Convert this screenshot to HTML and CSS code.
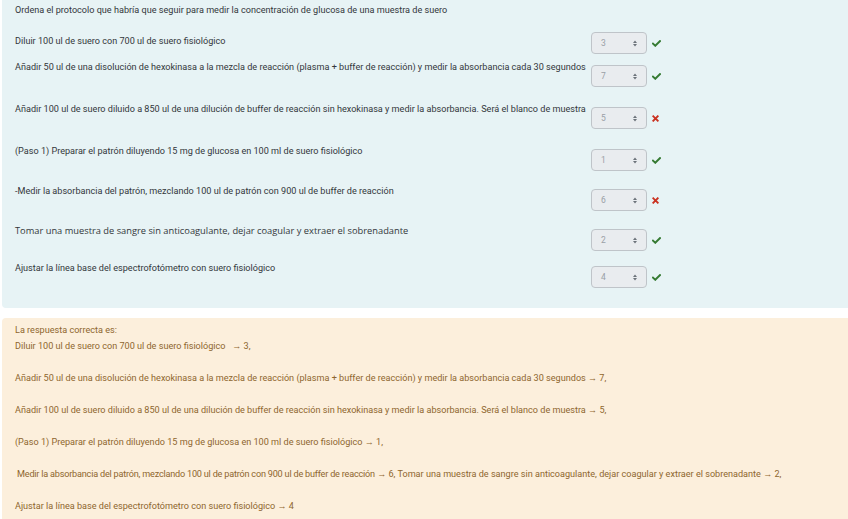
FILE: index.html
```html
<!DOCTYPE html>
<html lang="es">
<head>
    <meta charset="UTF-8">
    <title>Pregunta de emparejamiento</title>
    <link rel="stylesheet" href="styles.css">
</head>
<body>
    <div class="que">
        <div class="formulation">
            <p class="qtext">Ordena el protocolo que habría que seguir para medir la concentración de glucosa de una muestra de suero</p>

            <div class="answer">
                <div class="row first">
                    <div class="stem">Diluir 100 ul de suero con 700 ul de suero fisiológico</div>
                    <div class="control">
                        <div class="select"><span>3</span><svg class="arrows" viewBox="0 0 4 7"><path d="M0 3 L2 0.5 L4 3 Z M0 4 L2 6.5 L4 4 Z"/></svg></div>
                        <svg class="mark ok" viewBox="0 0 10 8"><path d="M1 4.2 L3.6 6.6 L9 1.2"/></svg>
                    </div>
                </div>
                <div class="row tall">
                    <div class="stem">Añadir 50 ul de una disolución de hexokinasa a la mezcla de reacción (plasma + buffer de reacción) y medir la absorbancia cada 30 segundos</div>
                    <div class="control">
                        <div class="select"><span>7</span><svg class="arrows" viewBox="0 0 4 7"><path d="M0 3 L2 0.5 L4 3 Z M0 4 L2 6.5 L4 4 Z"/></svg></div>
                        <svg class="mark ok" viewBox="0 0 10 8"><path d="M1 4.2 L3.6 6.6 L9 1.2"/></svg>
                    </div>
                </div>
                <div class="row tall">
                    <div class="stem">Añadir 100 ul de suero diluido a 850 ul de una dilución de buffer de reacción sin hexokinasa y medir la absorbancia. Será el blanco de muestra</div>
                    <div class="control">
                        <div class="select"><span>5</span><svg class="arrows" viewBox="0 0 4 7"><path d="M0 3 L2 0.5 L4 3 Z M0 4 L2 6.5 L4 4 Z"/></svg></div>
                        <svg class="mark bad" viewBox="0 0 8 8"><path d="M1.5 1.5 L6.5 6.5 M6.5 1.5 L1.5 6.5"/></svg>
                    </div>
                </div>
                <div class="row">
                    <div class="stem">(Paso 1) Preparar el patrón diluyendo 15 mg de glucosa en 100 ml de suero fisiológico</div>
                    <div class="control">
                        <div class="select"><span>1</span><svg class="arrows" viewBox="0 0 4 7"><path d="M0 3 L2 0.5 L4 3 Z M0 4 L2 6.5 L4 4 Z"/></svg></div>
                        <svg class="mark ok" viewBox="0 0 10 8"><path d="M1 4.2 L3.6 6.6 L9 1.2"/></svg>
                    </div>
                </div>
                <div class="row">
                    <div class="stem">-Medir la absorbancia del patrón, mezclando 100 ul de patrón con 900 ul de buffer de reacción</div>
                    <div class="control">
                        <div class="select"><span>6</span><svg class="arrows" viewBox="0 0 4 7"><path d="M0 3 L2 0.5 L4 3 Z M0 4 L2 6.5 L4 4 Z"/></svg></div>
                        <svg class="mark bad" viewBox="0 0 8 8"><path d="M1.5 1.5 L6.5 6.5 M6.5 1.5 L1.5 6.5"/></svg>
                    </div>
                </div>
                <div class="row short">
                    <div class="stem"><span class="pasted">Tomar una muestra de sangre sin anticoagulante, dejar coagular y extraer el sobrenadante</span></div>
                    <div class="control">
                        <div class="select"><span>2</span><svg class="arrows" viewBox="0 0 4 7"><path d="M0 3 L2 0.5 L4 3 Z M0 4 L2 6.5 L4 4 Z"/></svg></div>
                        <svg class="mark ok" viewBox="0 0 10 8"><path d="M1 4.2 L3.6 6.6 L9 1.2"/></svg>
                    </div>
                </div>
                <div class="row">
                    <div class="stem">Ajustar la línea base del espectrofotómetro con suero fisiológico</div>
                    <div class="control">
                        <div class="select"><span>4</span><svg class="arrows" viewBox="0 0 4 7"><path d="M0 3 L2 0.5 L4 3 Z M0 4 L2 6.5 L4 4 Z"/></svg></div>
                        <svg class="mark ok" viewBox="0 0 10 8"><path d="M1 4.2 L3.6 6.6 L9 1.2"/></svg>
                    </div>
                </div>
            </div>
        </div>

        <div class="outcome">
            <p class="lead">La respuesta correcta es:</p>
            <p>Diluir 100 ul de suero con 700 ul de suero fisiológico&nbsp;&nbsp;&nbsp;→ 3,</p>
            <p>Añadir 50 ul de una disolución de hexokinasa a la mezcla de reacción (plasma + buffer de reacción) y medir la absorbancia cada 30 segundos → 7,</p>
            <p>Añadir 100 ul de suero diluido a 850 ul de una dilución de buffer de reacción sin hexokinasa y medir la absorbancia. Será el blanco de muestra → 5,</p>
            <p>(Paso 1) Preparar el patrón diluyendo 15 mg de glucosa en 100 ml de suero fisiológico → 1,</p>
            <p><span class="tight">&nbsp;Medir la absorbancia del patrón, mezclando 100 ul de patrón con 900 ul de buffer de reacción</span> → 6, Tomar una muestra de sangre sin anticoagulante, dejar coagular y extraer el sobrenadante → 2,</p>
            <p>Ajustar la línea base del espectrofotómetro con suero fisiológico → 4</p>
        </div>
    </div>
</body>
</html>
```

FILE: styles.css
```css
/* Page base */
body {
    margin: 0;
    font-family: Roboto, "Liberation Sans", sans-serif;
    font-size: 9.1px;
    line-height: 12px;
    color: #33373b;
    background: #ffffff;
}

.que {
    padding-left: 2px;
}

/* Question block (blue) */
.formulation {
    background-color: #e7f3f5;
    height: 308px;
    box-sizing: border-box;
    padding: 4px 0 0 13px;
    border-radius: 0 0 0 4px;
}

.qtext {
    margin: 0 0 16px 0;
}

/* Match rows */
.row {
    display: flex;
    align-items: flex-start;
    height: 40px;
}

.row.first {
    height: 29px;
}

.row.tall {
    height: 42px;
}

.row.short {
    height: 37px;
}

.stem {
    width: 576px;
    white-space: nowrap;
}

.row.first .stem {
    margin-top: 3px;
}

/* text pasted from another document keeps its own font */
.pasted {
    font-family: "Open Sans", Roboto, sans-serif;
    font-size: 9.3px;
}

.tight {
    letter-spacing: -0.2px;
}

.control {
    display: flex;
    align-items: center;
    gap: 5px;
    margin-top: 4px;
}

.row.first .control {
    margin-top: 0;
}

/* Disabled select look */
.select {
    width: 56px;
    height: 22px;
    box-sizing: border-box;
    border: 1px solid #bfc4c9;
    border-radius: 4px;
    background-color: #e9ecef;
    display: flex;
    align-items: center;
    justify-content: space-between;
    padding: 0 9px 0 9px;
    color: #9aa0a6;
    font-size: 8.5px;
}

.arrows {
    width: 4px;
    height: 7px;
    fill: #6c737a;
}

/* Right / wrong marks */
.mark {
    fill: none;
    stroke-linecap: square;
}

.mark.ok {
    width: 9px;
    height: 7px;
    stroke: #357a32;
    stroke-width: 2.2;
}

.mark.bad {
    width: 7px;
    height: 7px;
    stroke: #ca3120;
    stroke-width: 2.2;
}

/* Feedback block (orange) */
.outcome {
    margin-top: 10px;
    background-color: #fcefdc;
    border-radius: 4px 0 0 0;
    padding: 4px 0 4px 13px;
    color: #8e662e;
    line-height: 16px;
    min-height: 201px;
    box-sizing: border-box;
}

.outcome p {
    margin: 0 0 16px 0;
    white-space: nowrap;
}

.outcome .lead {
    margin: 0;
}
```
